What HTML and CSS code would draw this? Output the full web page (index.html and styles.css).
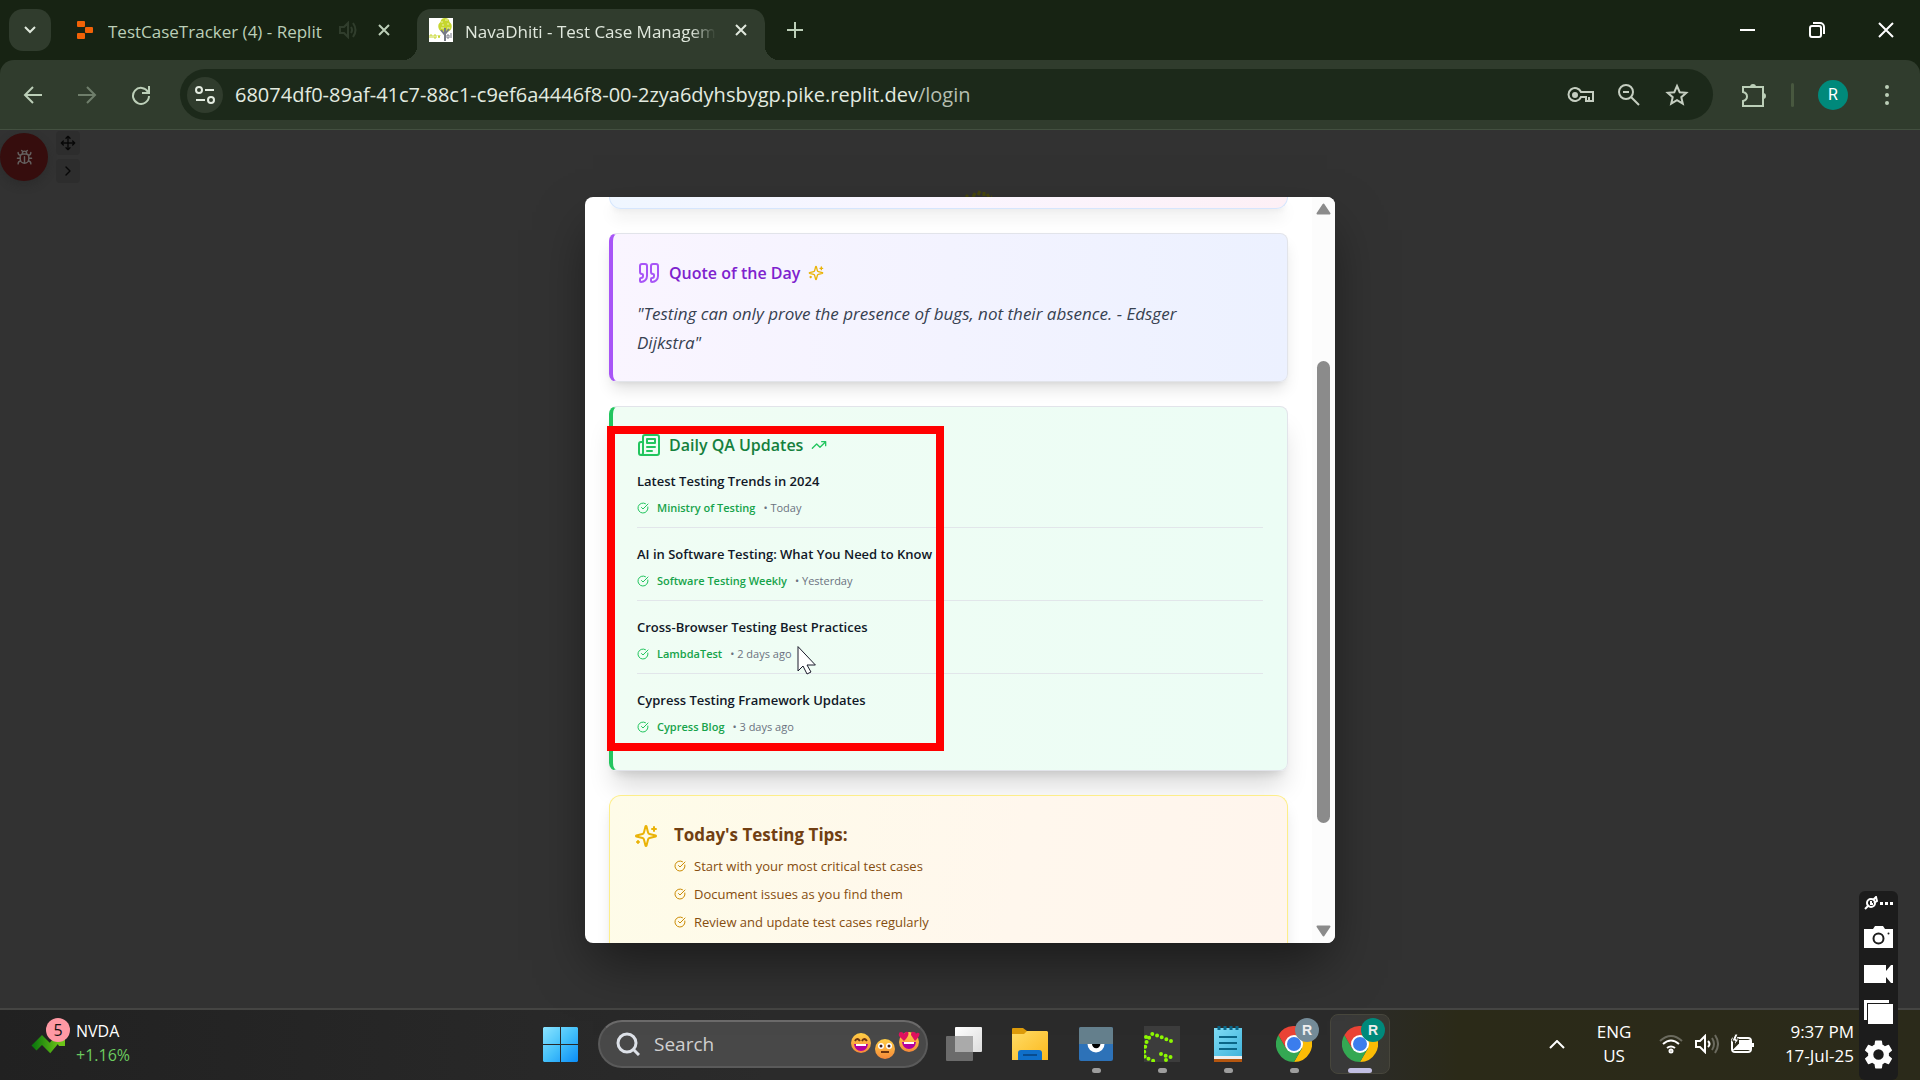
FILE: index.html
```html
<!DOCTYPE html>
<html lang="en">
<head>
<meta charset="utf-8">
<meta name="viewport" content="width=device-width, initial-scale=1">
<title>NavaDhiti - Test Case Management</title>
<link rel="stylesheet" href="styles.css">
</head>
<body>
<svg class="defs" aria-hidden="true">
  <symbol id="check" viewBox="0 0 24 24"><path d="M21.801 10A10 10 0 1 1 17 3.335"/><path d="m9 11 3 3L22 4"/></symbol>
  <symbol id="sparkles" viewBox="0 0 24 24"><path d="M9.937 15.5A2 2 0 0 0 8.5 14.063l-6.135-1.582a.5.5 0 0 1 0-.962L8.5 9.936A2 2 0 0 0 9.937 8.5l1.582-6.135a.5.5 0 0 1 .963 0L14.063 8.5A2 2 0 0 0 15.5 9.937l6.135 1.581a.5.5 0 0 1 0 .964L15.5 14.063a2 2 0 0 0-1.437 1.437l-1.582 6.135a.5.5 0 0 1-.963 0z"/><path d="M20 3v4M22 5h-4M4 17v2M5 18H3"/></symbol>
  <symbol id="close" viewBox="0 0 12 12"><path d="M1 1l10 10M11 1L1 11"/></symbol>
  <symbol id="chrome" viewBox="0 0 36 36">
    <path fill="#fbbc05" d="M18 9h15.600A18 18 0 0 1 18 36l7.800-13.500z"/>
    <path fill="#34a853" d="M2.400 9A18 18 0 0 0 18 36l7.800-13.500L10.200 22.500z"/>
    <path fill="#ea4335" d="M2.400 9A18 18 0 0 1 33.600 9H18l-7.800 13.500z"/>
    <circle cx="18" cy="18" r="9" fill="#fff"/><circle cx="18" cy="18" r="7" fill="#3b7ded"/>
  </symbol>
</svg>

<header class="browser">
  <div class="tabstrip">
    <button class="tab-search" aria-label="Search tabs"><svg width="12" height="8" viewBox="0 0 12 8"><path d="M1 1l5 5 5-5"/></svg></button>
    <div class="tab">
      <svg class="tab-icon" width="16" height="18" viewBox="0 0 16 18"><g fill="#f26207"><rect width="8" height="6" rx="1"/><rect x="8" y="6" width="8" height="6" rx="1"/><rect y="12" width="8" height="6" rx="1"/></g></svg>
      <span class="tab-title">TestCaseTracker (4) - Replit</span>
      <svg class="muted" width="18" height="18" viewBox="0 0 18 18"><path d="M1 6h4l4-4v14l-4-4H1zM12 6q2 3 0 6M14 2q5 7 0 14"/></svg>
      <button class="tab-close" aria-label="Close tab"><svg width="12" height="12"><use href="#close"/></svg></button>
    </div>
    <div class="tab active">
      <svg class="favicon" width="24" height="24" viewBox="0 0 24 24"><rect width="24" height="24" fill="#fff"/><path d="M16 0q4 0 4.500 4 3 2 2 6-1 4-6.500 4T9.500 10q-1-4 2-6Q12 0 16 0" fill="#c6d62f"/><path d="M12 4h2m2-2h3m-6 5h2m3-1h2m-8 4h3m3 0h3" stroke="#edf2a8"/><path d="M16 23V10m0 6 4-5m-4 6-4-5" stroke="#777b86" stroke-width="2" fill="none"/><path d="M1 20v-3h2v3M5 17h2v3H5zM9 17l1 3 1-3" stroke="#c6d62f"/><path d="M18 17h2v3h-2zM22 15v5" stroke="#777b86"/></svg>
      <span class="tab-title">NavaDhiti - Test Case Management</span>
      <button class="tab-close" aria-label="Close tab"><svg width="12" height="12"><use href="#close"/></svg></button>
    </div>
    <button class="new-tab" aria-label="New tab"><svg width="16" height="16" viewBox="0 0 16 16"><path d="M8 0v16M0 8h16"/></svg></button>
    <div class="window-controls">
      <button aria-label="Minimize"><svg width="16" height="16" viewBox="0 0 16 16"><path d="M0 8h15"/></svg></button>
      <button aria-label="Restore"><svg width="16" height="16" viewBox="0 0 16 16"><rect x="1" y="4" width="11" height="11" rx="2"/><path d="M4 1h7a4 4 0 0 1 4 4v7"/></svg></button>
      <button aria-label="Close"><svg width="16" height="16" viewBox="0 0 16 16"><path d="M1 1l14 14M15 1L1 15"/></svg></button>
    </div>
  </div>
  <div class="toolbar">
    <button class="nav" aria-label="Back"><svg width="20" height="20" viewBox="0 0 20 20"><path d="M19 10H2M10 2l-8 8 8 8"/></svg></button>
    <button class="nav dim" aria-label="Forward"><svg width="20" height="20" viewBox="0 0 20 20"><path d="M1 10h17M10 2l8 8-8 8"/></svg></button>
    <button class="nav" aria-label="Reload"><svg width="20" height="20" viewBox="0 0 20 20"><path d="M17 7A8 8 0 1 0 18 11M18 1v7h-7"/></svg></button>
    <div class="omnibox">
      <button class="site-info" aria-label="Site information"><svg width="20" height="20" viewBox="0 0 20 20"><circle cx="4" cy="5" r="3"/><path d="M10 5h9M1 15h9"/><circle cx="16" cy="15" r="3"/></svg></button>
      <div class="url">68074df0-89af-41c7-88c1-c9ef6a4446f8-00-2zya6dyhsbygp.pike.replit.dev<span>/login</span></div>
      <button class="omni-btn" aria-label="Passwords"><svg width="28" height="18" viewBox="0 0 28 18"><path d="M14 6h12v9h-7v-4h-5A6.500 6.500 0 1 1 14 6zM22 11v4"/><circle cx="8" cy="9" r="2" class="solid"/></svg></button>
      <button class="omni-btn" aria-label="Zoom"><svg width="22" height="22" viewBox="0 0 22 22"><circle cx="8" cy="8" r="7"/><path d="M13 13l8 8M5 8h6"/></svg></button>
      <button class="omni-btn" aria-label="Bookmark"><svg width="24" height="24" viewBox="0 0 24 24"><path d="M12 3l2.700 6.200 6.600.600-5 4.400 1.500 6.500L12 17.200l-5.800 3.500 1.500-6.500-5-4.400 6.600-.600z"/></svg></button>
    </div>
    <button class="tool" aria-label="Extensions"><svg width="26" height="26" viewBox="0 0 26 26"><path d="M2 5h20v19H2v-5q4-1 4-4.500T2 10z"/><path class="solid" d="M10 5a2 2 0 0 1 4 0zM22 12a2 2 0 0 1 0 4z"/></svg></button>
    <span class="divider"></span>
    <button class="avatar" aria-label="Profile">R</button>
    <button class="tool menu" aria-label="Menu"><svg width="6" height="22" viewBox="0 0 6 22"><g class="solid"><circle cx="3" cy="3" r="1"/><circle cx="3" cy="11" r="1"/><circle cx="3" cy="19" r="1"/></g></svg></button>
  </div>
</header>

<main class="page">
  <div class="bug-widget">
    <button class="bug" aria-label="Report a bug"><svg width="17" height="17" viewBox="0 0 24 24"><path d="m8 2 1.880 1.880M14.120 3.880 16 2M9 7.130v-1a3.003 3.003 0 1 1 6 0v1M12 20c-3.300 0-6-2.700-6-6v-3a4 4 0 0 1 4-4h4a4 4 0 0 1 4 4v3c0 3.300-2.700 6-6 6M12 20v-9M6.530 9C4.600 8.800 3 7.100 3 5M6 13H2M3 21c0-2.100 1.700-3.900 3.800-4M20.970 5c0 2.100-1.600 3.800-3.500 4M22 13h-4M17.200 17c2.100.100 3.800 1.900 3.800 4"/></svg></button>
    <div class="bug-side">
      <button aria-label="Move"><svg width="16" height="16" viewBox="0 0 24 24"><path d="M12 2v20M2 12h20M9 19l3 3 3-3M19 9l3 3-3 3M5 9l-3 3 3 3M9 5l3-3 3 3"/></svg></button>
      <button aria-label="Expand"><svg width="16" height="16" viewBox="0 0 24 24"><path d="m9 18 6-6-6-6"/></svg></button>
    </div>
  </div>
  <svg class="page-logo" width="30" height="8" viewBox="0 0 30 8"><path d="M2 7l2-2M9 7l2-4M14 5l2-4M20 6V2M25 7l-2-3M28 7h-1" stroke="#46460c" stroke-width="3"/></svg>

  <section class="modal" role="dialog" aria-label="Daily updates">
    <div class="modal-body">
      <div class="card welcome"></div>
      <article class="card quote">
        <h2 class="card-title"><svg width="24" height="24" viewBox="0 0 24 24"><path d="M16 3a2 2 0 0 0-2 2v6a2 2 0 0 0 2 2 1 1 0 0 1 1 1v1a2 2 0 0 1-2 2 1 1 0 0 0-1 1v2a1 1 0 0 0 1 1 6 6 0 0 0 6-6V5a2 2 0 0 0-2-2z"/><path d="M5 3a2 2 0 0 0-2 2v6a2 2 0 0 0 2 2 1 1 0 0 1 1 1v1a2 2 0 0 1-2 2 1 1 0 0 0-1 1v2a1 1 0 0 0 1 1 6 6 0 0 0 6-6V5a2 2 0 0 0-2-2z"/></svg>Quote of the Day<svg class="gold" width="16" height="16"><use href="#sparkles"/></svg></h2>
        <p>"Testing can only prove the presence of bugs, not their absence. - Edsger Dijkstra"</p>
      </article>
      <article class="card updates">
        <h2 class="card-title"><svg width="24" height="24" viewBox="0 0 24 24"><path d="M4 22h16a2 2 0 0 0 2-2V4a2 2 0 0 0-2-2H8a2 2 0 0 0-2 2v16a2 2 0 0 1-2 2Zm0 0a2 2 0 0 1-2-2v-9c0-1.100.900-2 2-2h2M18 14h-8M15 18h-5M10 6h8v4h-8V6Z"/></svg>Daily QA Updates<svg width="16" height="16" viewBox="0 0 24 24"><path d="M22 7l-8.500 8.500-5-5L2 17M16 7h6v6"/></svg></h2>
        <ul class="news">
          <li><h3>Latest Testing Trends in 2024</h3><div class="meta"><svg width="12" height="12"><use href="#check"/></svg><b>Ministry of Testing</b><span>• Today</span></div></li>
          <li><h3>AI in Software Testing: What You Need to Know</h3><div class="meta"><svg width="12" height="12"><use href="#check"/></svg><b>Software Testing Weekly</b><span>• Yesterday</span></div></li>
          <li><h3>Cross-Browser Testing Best Practices</h3><div class="meta"><svg width="12" height="12"><use href="#check"/></svg><b>LambdaTest</b><span>• 2 days ago</span></div></li>
          <li><h3>Cypress Testing Framework Updates</h3><div class="meta"><svg width="12" height="12"><use href="#check"/></svg><b>Cypress Blog</b><span>• 3 days ago</span></div></li>
        </ul>
        <div class="highlight"></div>
        <svg class="cursor" width="20" height="30" viewBox="0 0 20 30"><path d="M1 1v24l5-5 4 8 4-2-4-7h8z" fill="#fff" stroke="#1a1a2a" stroke-width="1"/></svg>
      </article>
      <article class="card tips">
        <svg class="gold" width="24" height="24"><use href="#sparkles"/></svg>
        <div>
          <h2>Today's Testing Tips:</h2>
          <ul>
            <li><svg width="12" height="12"><use href="#check"/></svg>Start with your most critical test cases</li>
            <li><svg width="12" height="12"><use href="#check"/></svg>Document issues as you find them</li>
            <li><svg width="12" height="12"><use href="#check"/></svg>Review and update test cases regularly</li>
          </ul>
        </div>
      </article>
    </div>
    <div class="scrollbar">
      <svg width="15" height="12" viewBox="0 0 15 12"><path d="M7.500 1.500 13.500 10.500H1.500z"/></svg>
      <div class="track"><div class="thumb"></div></div>
      <svg width="15" height="12" viewBox="0 0 15 12"><path d="M7.500 10.500 13.500 1.500H1.500z"/></svg>
    </div>
  </section>
</main>

<footer class="taskbar">
  <div class="widget">
    <div class="stock-icon"><svg width="36" height="26" viewBox="0 0 36 26"><defs><linearGradient id="st"><stop stop-color="#0e7a0d"/><stop offset="1" stop-color="#6cc417"/></linearGradient></defs><path d="M3 20l8-8 8 8 10-12" fill="none" stroke="url(#st)" stroke-width="7"/><path d="M18 2h16v16H28z" fill="#6cc417"/></svg><span class="badge">5</span></div>
    <div class="stock"><span>NVDA</span><span class="up">+1.16%</span></div>
  </div>
  <nav class="apps" aria-label="Apps">
    <button class="app" aria-label="Start"><svg width="35" height="35" viewBox="0 0 35 35"><defs><linearGradient id="wn" x2="1" y2="1"><stop stop-color="#8be4ff"/><stop offset=".5" stop-color="#45c1fa"/><stop offset="1" stop-color="#0a8df8"/></linearGradient></defs><path fill="url(#wn)" d="M1 0h16v17H0V1zM18 0h16l1 1v16H18zM0 18h17v17H1l-1-1zM18 18h17v16l-1 1H18z"/></svg></button>
    <label class="search">
      <svg width="24" height="24" viewBox="0 0 24 24"><circle cx="11" cy="11" r="9"/><path d="M17 17l6 6"/></svg>
      <input type="text" placeholder="Search" aria-label="Search">
      <svg class="faces" width="70" height="32" viewBox="0 0 70 32">
        <defs><linearGradient id="fc" x2="0" y2="1"><stop stop-color="#ffcf45"/><stop offset="1" stop-color="#f5893a"/></linearGradient></defs>
        <g fill="url(#fc)"><circle cx="11" cy="15" r="10"/><circle cx="35" cy="21" r="10"/><circle cx="59" cy="14" r="10"/></g>
        <path d="M5 13q2-4 5 0M12 13q2-4 5 0" fill="none" stroke="#6b3410" stroke-width="2"/><path d="M4 16h14q-1 7-7 7t-7-7zM52 14h14q-1 7-7 7t-7-7z" fill="#b4009e"/><path d="M6 17h10M54 15h10" stroke="#fff" stroke-width="2"/>
        <circle cx="31" cy="18" r="3" fill="#fff"/><circle cx="39" cy="18" r="3" fill="#fff"/><circle cx="31" cy="18" r="1.500" fill="#43221a"/><circle cx="39" cy="18" r="1.500" fill="#43221a"/><path d="M31 24h8" stroke="#6b3410" stroke-width="2"/>
        <path d="M54 13l-5-5q-1-4 2-4 2 0 3 2 1-3 4-2 2 3-4 9zM65 13l-4-6q0-4 3-3 2 0 2 2 1-2 3-1 2 2-4 8z" fill="#e0115f"/>
      </svg>
    </label>
    <button class="app" aria-label="Task view"><svg width="36" height="34" viewBox="0 0 36 34"><defs><linearGradient id="tv" x2="1" y2="1"><stop stop-color="#fff"/><stop offset="1" stop-color="#dcdcdc"/></linearGradient></defs><rect x="9" width="27" height="25" rx="1" fill="url(#tv)"/><rect y="9" width="27" height="25" rx="1" fill="#777" opacity=".85"/><path d="M9 9h18v16H9z" fill="#aaa"/></svg></button>
    <button class="app" aria-label="File Explorer"><svg width="36" height="34" viewBox="0 0 36 34"><defs><linearGradient id="fo" x2="1" y2="1"><stop stop-color="#ffdc66"/><stop offset="1" stop-color="#fbb81d"/></linearGradient></defs><path d="M0 2q0-1 1-1h10l4 3v6H0z" fill="#dc9a0a"/><path d="M0 7h12l3-3h20l1 1v28H0z" fill="url(#fo)"/><path d="M6 33v-7q0-3 3-3h18q3 0 3 3v7z" fill="#0f6fc9"/><path d="M11 28h14" stroke="#084c8f" stroke-width="2"/></svg></button>
    <button class="app running" aria-label="Viewer"><svg width="36" height="36" viewBox="0 0 36 36"><rect x="1" y="1" width="34" height="34" rx="2" fill="#2d72b8"/><path d="M1 18V3q0-2 2-2h30q2 0 2 2v15z" fill="#647f8c"/><path d="M9.500 18a8.500 8.500 0 0 0 17 0z" fill="#fff"/><path d="M14 18a4.200 4.200 0 0 0 8.400 0z" fill="#000"/></svg></button>
    <button class="app running" aria-label="Greenshot"><svg width="36" height="36" viewBox="0 0 36 36"><path d="M0 0h36v36H0z" fill="#3c3c3c"/><path d="M27 15l-5-2-5-2-5-2-4-1-3 4-3 5-1 5-1 5 1 5 4 1 5 2M2 11h.1M17 28l5 2 5 1M22 34h.1" fill="none" class="dots"/></svg></button>
    <button class="app running" aria-label="Notepad"><svg width="28" height="36" viewBox="0 0 28 36"><defs><linearGradient id="np" x2="1" y2="1"><stop stop-color="#7fdcf5"/><stop offset="1" stop-color="#41b4dc"/></linearGradient></defs><path d="M0 30h28v6H0z" fill="#b5560f"/><path d="M0 29h28v4H0z" fill="#eee"/><path d="M0 2h28v28H0z" fill="url(#np)"/><path d="M5 11h18M5 17h18M5 23h18" stroke="#0a6687" stroke-width="2"/><path d="M5 0v4M11 0v4M17 0v4M23 0v4" stroke="#0a6687" stroke-width="3"/></svg></button>
    <button class="app running" aria-label="Chrome"><svg width="36" height="36"><use href="#chrome"/></svg><span class="profile">R</span></button>
    <button class="app running current" aria-label="Chrome, active"><svg width="36" height="36"><use href="#chrome"/></svg><span class="profile teal">R</span></button>
  </nav>
  <div class="tray">
    <button class="chevron" aria-label="Hidden icons"><svg width="16" height="9" viewBox="0 0 16 9"><path d="M1 8l7-7 7 7"/></svg></button>
    <div class="lang"><span>ENG</span><span>US</span></div>
    <div class="status">
      <svg width="24" height="20" viewBox="0 0 24 20"><path d="M1 7q11-10 22 0" opacity=".3"/><path d="M4 10q8-7 16 0M8 14q4-3 8 0"/><circle cx="12" cy="17" r="1.500"/></svg>
      <svg width="24" height="20" viewBox="0 0 24 20"><path d="M1 7h4l5-5v16l-5-5H1zM13 7q3 3 0 6"/><path d="M17 4q4 6 0 12M20 1q6 9 0 18" opacity=".3"/></svg>
      <svg width="24" height="20" viewBox="0 0 24 20"><rect x="1" y="4" width="19" height="14" rx="3"/><path d="M9 7h9v8H4l5-5zM22 9v4" fill="#fff"/><path d="M4 0L1 7h3l-1 5 5-7H5l2-5z" fill="#fff" stroke="#2b2a18" stroke-width="1"/></svg>
    </div>
    <div class="clock"><span>9:37 PM</span><span>17-Jul-25</span></div>
  </div>
</footer>

<aside class="recorder" aria-label="Capture tools">
  <div class="rec-head"><svg width="14" height="14" viewBox="0 0 14 14"><circle cx="7" cy="7" r="4"/><path d="M1 13l4-4M9 4l3-3 1 4-3 2M7 5v3h2"/></svg><svg width="13" height="3" viewBox="0 0 13 3"><path d="M0 1.500h3M5 1.500h3M10 1.500h3" stroke-width="3"/></svg></div>
  <button aria-label="Screenshot"><svg width="29" height="22" viewBox="0 0 29 22"><path d="M0 3h9l2-3h8l2 3h8v19H0z" fill="#fff"/><circle cx="14.500" cy="12.500" r="5" stroke="#1c1c1c" stroke-width="2" fill="none"/><circle cx="24.500" cy="7.500" r="1" fill="#1c1c1c"/></svg></button>
  <button aria-label="Record video"><svg width="29" height="20" viewBox="0 0 29 20"><path d="M0 1h22v6l5-6h2v18h-2l-5-6v6H0z" fill="#fff"/></svg></button>
  <button aria-label="Gallery"><svg width="29" height="24" viewBox="0 0 29 24"><path d="M0 0h25v3H3v17H0zM4 4h25v20H4z" fill="#fff"/></svg></button>
  <button aria-label="Settings"><svg width="29" height="29" viewBox="2 2 20 20"><path fill="#fff" d="M19.140 12.940c.040-.300.060-.610.060-.940s-.020-.640-.070-.940l2.030-1.580a.49.49 0 0 0 .120-.610l-1.920-3.320a.49.49 0 0 0-.590-.220l-2.390.960a7 7 0 0 0-1.620-.940l-.360-2.540a.48.48 0 0 0-.480-.410h-3.840a.48.48 0 0 0-.470.410l-.360 2.540a7 7 0 0 0-1.620.940l-2.390-.960a.48.48 0 0 0-.590.220L2.740 8.870a.48.48 0 0 0 .120.610l2.030 1.580a6 6 0 0 0 0 1.880l-2.030 1.580a.49.49 0 0 0-.120.610l1.920 3.320c.120.220.370.290.590.220l2.390-.960c.500.380 1.030.700 1.620.940l.360 2.540c.050.240.240.410.480.410h3.840c.240 0 .440-.170.470-.410l.360-2.540a7 7 0 0 0 1.620-.940l2.390.960c.220.080.470 0 .590-.220l1.920-3.320a.48.48 0 0 0-.120-.610zM12 15.600a3.600 3.600 0 1 1 0-7.200 3.600 3.600 0 0 1 0 7.200"/></svg></button>
</aside>
</body>
</html>
```

FILE: styles.css
```css
* { box-sizing: border-box; }
body {
  margin: 0;
  min-height: 100vh;
  display: grid;
  grid-template-rows: auto 1fr auto;
  font-family: "Open Sans", "Noto Sans", sans-serif;
  font-size: 14px;
  background: #323232;
  overflow: hidden;
  position: relative;
}
h2, h3, p, ul { margin: 0; padding: 0; }
ul { list-style: none; }
button { border: 0; padding: 0; background: none; color: inherit; font: inherit; display: grid; place-items: center; }
svg { display: block; flex: none; fill: none; }
.defs { position: absolute; width: 0; height: 0; }

/* browser frame */
.browser { background: #172313; color: #bccfb8; }
.browser svg { stroke: currentColor; stroke-width: 2; }
.browser .solid { fill: currentColor; }
.tabstrip { display: flex; height: 60px; padding: 9px 0 0 9px; }
.tab-search { width: 42px; height: 42px; border-radius: 14px; background: #303c2d; color: #dfe8dc; }
.tab { display: flex; align-items: center; height: 42px; width: 366px; padding-left: 26px; }
.browser .tab-icon, .browser .favicon { stroke: none; stroke-width: 1; }
.tab-icon { margin-right: 15px; }
.tab-title { flex: 1; padding-top: 3px; white-space: nowrap; overflow: hidden; font-size: 17px; line-height: 24px; }
.muted { opacity: .15; margin-right: 15px; }
.tab-close { width: 24px; height: 24px; margin-right: 21px; }
.tab.active { position: relative; width: 348px; height: 51px; padding: 0 0 9px 12px; background: #303c2d; color: #e0e8dd; border-radius: 14px 14px 0 0; }
.tab.active::before, .tab.active::after { content: ""; position: absolute; bottom: 0; width: 14px; height: 14px; }
.tab.active::before { left: -14px; background: radial-gradient(circle at 0 0, transparent 14px, #303c2d 14px); }
.tab.active::after { right: -14px; background: radial-gradient(circle at 100% 0, transparent 14px, #303c2d 14px); }
.active .tab-title { margin: 0 13px 0 12px; mask-image: linear-gradient(90deg, #000 90%, transparent); }
.active .tab-close { margin-right: 12px; }
.favicon { overflow: hidden; }
.new-tab { width: 42px; height: 42px; margin-left: 9px; }
.window-controls { display: flex; margin-left: auto; color: #fff; }
.window-controls button { width: 69px; height: 42px; }
.toolbar { display: flex; align-items: center; height: 70px; padding: 0 12px 0 6px; background: #303c2d; border-bottom: 1px solid #435040; border-radius: 14px 14px 0 0; }
.nav { width: 54px; height: 42px; }
.dim { opacity: .45; }
.omnibox { flex: 1; display: flex; align-items: center; height: 51px; margin: 0 20px 0 12px; padding: 0 12px 0 7px; border-radius: 26px; background: #1c291a; color: #e3ebe0; }
.site-info { width: 36px; height: 36px; border-radius: 50%; background: #303c2d; }
.url { flex: 1; padding-left: 12px; font-size: 20px; line-height: 28px; white-space: nowrap; }
.url span { color: #b5beb0; }
.omni-btn { width: 48px; height: 42px; color: #c5cec1; }
.tool { width: 42px; height: 42px; }
.divider { width: 3px; height: 24px; margin: 0 24px 0 16px; border-radius: 2px; background: #48583f; }
.avatar { width: 30px; height: 30px; border-radius: 50%; background: #00897b; color: #fff; font-family: Roboto, sans-serif; font-size: 16px; }
.menu { margin-left: 18px; }

/* page under the overlay */
.page { position: relative; display: grid; place-items: center; grid-template-rows: 100%; min-height: 0; padding-top: 2px; }
.page-logo { position: absolute; top: 60px; left: 50%; margin-left: 4px; }
.bug-widget { position: absolute; top: 1px; left: 0; display: flex; gap: 8px; }
.bug-widget svg { stroke: currentColor; stroke-width: 2; stroke-linecap: round; stroke-linejoin: round; }
.bug { width: 48px; height: 48px; margin-top: 2px; border-radius: 50%; background: #360d0d; color: #64605f; box-shadow: 0 4px 8px #2226; }
.bug-side { display: grid; gap: 4px; color: #070707; }
.bug-side button { width: 24px; height: 24px; border-radius: 4px; background: #2d2d2d; }

/* dialog */
.modal { position: relative; display: flex; width: 750px; max-width: 90%; height: calc(85% + 2px); border-radius: 8px; overflow: hidden; background: #fff; box-shadow: 0 25px 50px -8px rgba(0, 0, 0, .5); }
.modal-body { flex: 1; display: flex; flex-direction: column; gap: 24px; padding: 0 24px; min-width: 0; overflow: hidden; }
.card { position: relative; flex: none; border: 1px solid #e2e4ea; border-radius: 8px; box-shadow: 0 10px 16px -3px rgba(0, 0, 0, .12), 0 4px 6px -4px rgba(0, 0, 0, .1); }
.card svg { stroke: currentColor; stroke-width: 2; stroke-linecap: round; stroke-linejoin: round; }
.welcome { height: 12px; border: 1px solid #d6e6fd; border-top: 0; border-radius: 0 0 12px 12px; background: linear-gradient(90deg, #eff6ff, #faf5ff 50%, #fdf0f6); }
.quote { padding: 25px 24px 24px; border-left: 4px solid #a855f7; background: linear-gradient(90deg, #faf5ff, #ecf1ff); color: #a855f7; }
.card-title { display: flex; align-items: center; gap: 8px; height: 28px; font-size: 16px; font-weight: 600; line-height: 28px; color: #7e22ce; }
.card-title > svg:first-child { color: #a855f7; }
.card .gold { color: #eab308; }
.quote p { margin-top: 12px; padding-right: 32px; font-size: 17px; font-style: italic; line-height: 29px; color: #374151; }
.updates { padding: 24px; border-left: 4px solid #22c55e; background: linear-gradient(90deg, #f0fdf4, #ecfdf5); box-shadow: 0 20px 26px -5px rgba(0, 0, 0, .15), 0 8px 10px -6px rgba(0, 0, 0, .12); }
.updates .card-title { color: #15803d; }
.updates .card-title > svg { color: #22c55e; }
.news { display: grid; gap: 16px; margin-top: 12px; }
.news li { padding-bottom: 10px; border-bottom: 1px solid #e2e6ea; }
.news li:last-child { border: 0; }
.news h3 { font-size: 13px; font-weight: 600; line-height: 20px; color: #111827; white-space: nowrap; }
.meta { display: flex; align-items: center; gap: 8px; margin-top: 8px; font-size: 11px; line-height: 18px; color: #6b7280; }
.meta svg { color: #22c55e; }
.meta b { font-weight: 600; color: #16a34a; }
.highlight { position: absolute; left: -6px; top: 19px; width: 337px; height: 325px; border: 8px solid #f00; }
.cursor { position: absolute; left: 184px; top: 239px; }
.tips { flex: 1; display: flex; gap: 16px; padding: 25px 24px; border: 1px solid #fdee8a; border-bottom: 0; border-radius: 12px 12px 0 0; background: linear-gradient(100deg, #fefce8, #fff7ed 60%, #fff5ed); color: #854d0e; }
.tips > svg { margin-top: 3px; }
.tips h2 { font-size: 17px; font-weight: 700; line-height: 28px; color: #713f12; }
.tips ul { display: grid; gap: 8px; margin-top: 7px; }
.tips li { display: flex; align-items: center; gap: 8px; font-size: 13px; line-height: 20px; }
.tips li svg { color: #ca8a04; }
.scrollbar { display: flex; flex-direction: column; align-items: center; width: 23px; padding: 6px 0; background: #fcfcfc; }
.scrollbar svg { fill: #8b8b8b; stroke: #8b8b8b; stroke-width: 2; stroke-linejoin: round; }
.track { flex: 1; width: 13px; display: grid; grid-template-rows: 146fr 462fr 102fr; }
.thumb { grid-row: 2; border-radius: 7px; background: #8b8b8b; }

/* taskbar */
.taskbar { display: grid; grid-template-columns: 1fr auto 1fr; height: 72px; border-top: 2px solid #454543; background: linear-gradient(90deg, #212121, #2b2b2b 40%, #2b2b2b 70%, #2b2a18 76%, #2b2a1a); color: #fff; font-size: 17px; line-height: 24px; }
.widget { display: flex; gap: 9px; padding: 8px 0 0 31px; }
.stock-icon { position: relative; padding-top: 10px; }
.badge { position: absolute; left: 15px; top: 0; width: 24px; height: 24px; border-radius: 50%; background: #ff99a4; color: #111; text-align: center; font-size: 16px; }
.stock, .lang, .clock { display: grid; align-content: start; }
.stock { padding-top: 1px; font-size: 16px; }
.up { color: #6ccb5f; }
.apps { display: flex; align-items: center; height: 68px; }
.app { position: relative; width: 66px; height: 68px; }
.search { display: flex; align-items: center; width: 330px; height: 48px; margin: 0 3px 0 5px; padding: 0 6px 0 16px; border: 2px solid #5a5a5a; border-top-color: #6c6b6b; border-radius: 24px; background: #484848; }
.search > svg:first-child { stroke: #dde1e8; stroke-width: 3; }
.search input { flex: 1; min-width: 0; margin-left: 14px; border: 0; padding: 0; background: none; font: inherit; font-size: 19px; color: #d0d0d0; }
.search input::placeholder { color: #d0d0d0; }
.running::after { content: ""; position: absolute; bottom: 5px; left: 29px; width: 9px; height: 5px; border-radius: 3px; background: #9d9d9d; }
.current::after { left: 21px; width: 24px; background: #c2bfe3; }
.current::before { content: ""; position: absolute; inset: 4px 3px; border: 1px solid #47463c; border-radius: 8px; background: #fff1; }
.current { z-index: 0; }
.current::before { z-index: -1; }
.dots { stroke: #8cf800; stroke-width: 4; stroke-linecap: round; stroke-dasharray: 0 5; }
.profile { position: absolute; left: 34px; top: 8px; width: 24px; height: 24px; border-radius: 50%; background: #748b98; color: #eee; font: 700 14px/24px "Liberation Sans", sans-serif; text-align: center; }
.profile.teal { background: #00897b; }
.tray { display: flex; justify-content: flex-end; align-items: center; height: 68px; padding-right: 66px; }
.tray svg { stroke: #fff; stroke-width: 2; }
.chevron { width: 24px; height: 40px; margin-right: 25px; }
.lang { justify-items: center; width: 40px; }
.status { display: flex; gap: 12px; margin: 0 24px 0 25px; }
.clock { justify-items: end; width: 75px; white-space: nowrap; }

/* floating capture toolbar */
.recorder { position: absolute; right: 22px; bottom: 0; width: 39px; height: 189px; padding: 5px 5px 11px; border-radius: 6px; background: #1c1c1c; display: flex; flex-direction: column; justify-content: space-between; }
.rec-head { display: flex; align-items: center; justify-content: space-between; }
.rec-head svg { stroke: #fff; stroke-width: 2; }
```
